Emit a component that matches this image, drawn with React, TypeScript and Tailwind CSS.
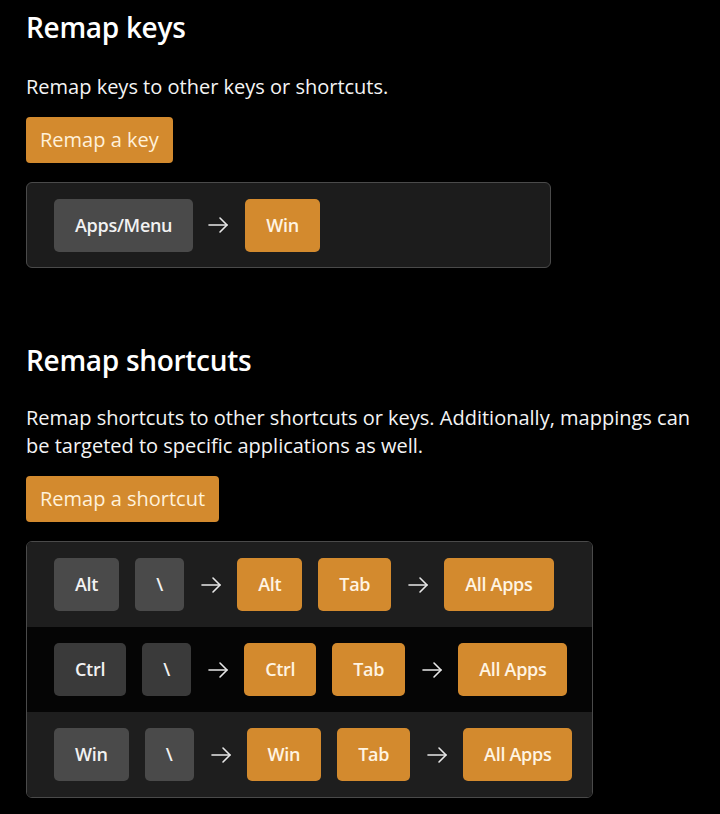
import React from "react";

const font = { fontFamily: '"Open Sans", "Noto Sans", sans-serif' };

function Arrow() {
  return (
    <svg width="24" height="24" viewBox="0 0 24 24" fill="none" stroke="#e8e8e8" strokeWidth="1.6" strokeLinecap="round" strokeLinejoin="round" className="shrink-0">
      <path d="M3 12h18" />
      <path d="M14 5l7 7-7 7" />
    </svg>
  );
}

function Key({ label, kind, dark }: { label: string; kind: "src" | "dst"; dark?: boolean }) {
  const cls =
    kind === "dst"
      ? "bg-[#d38a2e] text-[#fff4e2]"
      : dark
      ? "bg-[#3a3a3a] text-[#f2f2f2]"
      : "bg-[#4a4a4a] text-[#f2f2f2]";
  return (
    <div className={`h-[53px] min-w-[49px] px-[21px] rounded-[5px] flex items-center justify-center text-[18px] font-semibold tracking-[-0.3px] ${cls}`}>
      {label}
    </div>
  );
}

function Row({ src, dst, app, dark }: { src: string[]; dst: string[]; app: string; dark?: boolean }) {
  return (
    <div className={`flex items-center h-[85px] pl-[27px] ${dark ? "bg-[#050505]" : "bg-[#1e1e1e]"}`}>
      <div className="flex items-center gap-[16px]">
        {src.map((s) => (
          <Key key={s} label={s} kind="src" dark={dark} />
        ))}
      </div>
      <div className="ml-[15px] mr-[14px]">
        <Arrow />
      </div>
      <div className="flex items-center gap-[16px]">
        {dst.map((s) => (
          <Key key={s} label={s} kind="dst" />
        ))}
      </div>
      <div className="ml-[15px] mr-[14px]">
        <Arrow />
      </div>
      <Key label={app} kind="dst" />
    </div>
  );
}

export default function App() {
  return (
    <div className="min-h-[814px] w-[720px] bg-black text-white pl-[26px] pt-[10px]" style={font}>
      <h1 className="text-[28px] leading-[34px] font-semibold tracking-[-0.3px]">Remap keys</h1>
      <p className="mt-[29px] text-[20px] leading-[28px] text-[#f4f4f4]">Remap keys to other keys or shortcuts.</p>
      <button className="mt-[16px] h-[46px] px-[14px] rounded-[4px] bg-[#d38a2e] text-[#fff1da] text-[20px]">Remap a key</button>
      <div className="mt-[19px] w-[525px] h-[86px] rounded-[6px] border border-[#4a4a4a] bg-[#1c1c1c] flex items-center pl-[27px]">
        <Key label="Apps/Menu" kind="src" />
        <div className="ml-[13px] mr-[15px]">
          <Arrow />
        </div>
        <Key label="Win" kind="dst" />
      </div>

      <h1 className="mt-[75px] text-[28px] leading-[34px] font-semibold tracking-[-0.3px]">Remap shortcuts</h1>
      <p className="mt-[27px] text-[20px] leading-[28px] text-[#f4f4f4] w-[680px]">
        Remap shortcuts to other shortcuts or keys. Additionally, mappings can be targeted to specific applications as well.
      </p>
      <button className="mt-[16px] h-[46px] px-[14px] rounded-[4px] bg-[#d38a2e] text-[#fff1da] text-[20px]">Remap a shortcut</button>
      <div className="mt-[19px] w-[567px] rounded-[6px] border border-[#4a4a4a] overflow-hidden">
        <Row src={["Alt", "\\"]} dst={["Alt", "Tab"]} app="All Apps" />
        <Row src={["Ctrl", "\\"]} dst={["Ctrl", "Tab"]} app="All Apps" dark />
        <Row src={["Win", "\\"]} dst={["Win", "Tab"]} app="All Apps" />
      </div>
    </div>
  );
}
